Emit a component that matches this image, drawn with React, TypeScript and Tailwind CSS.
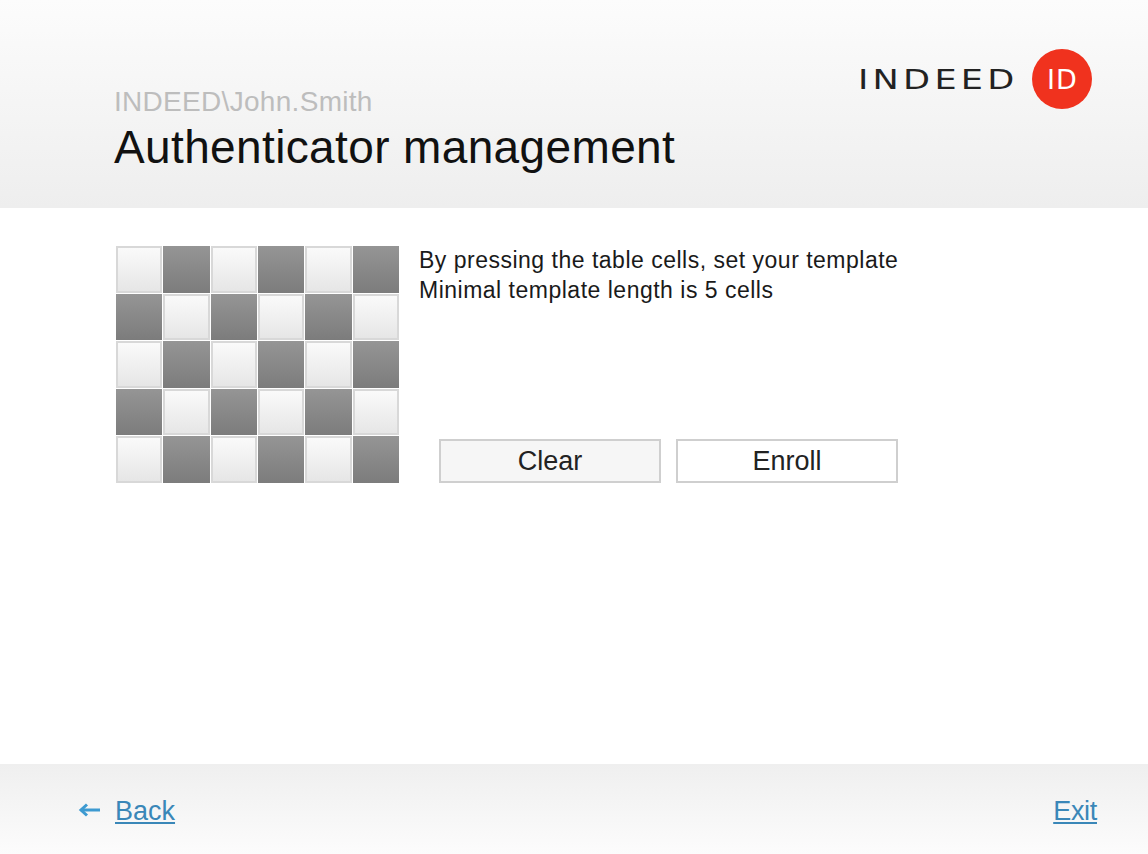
export default function App() {
  const cells = Array.from({ length: 30 }, (_, i) => (Math.floor(i / 6) + (i % 6)) % 2 === 1);
  return (
    <div className="flex h-[854px] w-[1148px] flex-col overflow-hidden bg-white font-['Liberation_Sans',Arial,sans-serif]">
      <header className="flex h-[208px] shrink-0 justify-between bg-gradient-to-b from-[#fcfcfc] to-[#eeeeee] pl-[114px] pr-[56px]">
        <div className="pt-[84px]">
          <div className="text-[28px] leading-[36px] tracking-[0.3px] text-[#bdbdbd]">INDEED\John.Smith</div>
          <h1 className="mt-[1px] text-[46px] leading-[52px] tracking-[0.37px] text-[#111111]">Authenticator management</h1>
        </div>
        <div className="mt-[48px] flex h-[62px] items-center gap-[13px]">
          <span className="origin-right scale-x-[1.3] font-['DejaVu_Sans',sans-serif] text-[27px] leading-none tracking-[3.3px] text-[#222222]">INDEED</span>
          <span className="flex h-[60px] w-[60px] items-center justify-center rounded-full bg-[#f0321e] pl-[1px] font-['DejaVu_Sans',sans-serif] text-[27px] leading-none tracking-[1px] text-white">ID</span>
        </div>
      </header>

      <main className="flex flex-1 items-start pl-[116px] pt-[38px]">
        <div className="grid h-[237px] w-[283px] shrink-0 grid-cols-6 grid-rows-5 gap-[1px]">
          {cells.map((dark, i) => (
            <div
              key={i}
              className={
                dark
                  ? "bg-gradient-to-b from-[#959595] to-[#7c7c7c]"
                  : "border-2 border-[#d8d8d8] bg-gradient-to-b from-[#fafafa] to-[#e6e6e6]"
              }
            />
          ))}
        </div>
        <div className="ml-[20px] flex h-[237px] w-[479px] flex-col justify-between">
          <p className="-mt-[1px] whitespace-nowrap text-[23px] leading-[30px] tracking-[0.5px] text-[#1a1a1a]">
            By pressing the table cells, set your template
            <br />
            Minimal template length is 5 cells
          </p>
          <div className="flex justify-end gap-[15px]">
            <button className="h-[44px] w-[222px] border-2 border-[#cfcfcf] bg-[#f6f6f6] text-[27px] leading-none text-[#222222]">Clear</button>
            <button className="h-[44px] w-[222px] border-2 border-[#cfcfcf] bg-white text-[27px] leading-none text-[#222222]">Enroll</button>
          </div>
        </div>
      </main>

      <footer className="flex h-[90px] shrink-0 items-center justify-between bg-gradient-to-b from-[#efefef] to-[#fcfcfc] pl-[78px] pr-[51px] pt-[4px]">
        <div className="flex items-center gap-[15px]">
          <svg className="mb-[2px]" width="22" height="14" viewBox="0 0 22 14" fill="none" stroke="#3d9ad1" strokeWidth="3">
            <path d="M22 7H3" />
            <path d="M9 1.5 3 7l6 5.5" />
          </svg>
          <a className="text-[27px] leading-none text-[#3a87b8] underline" href="#">Back</a>
        </div>
        <a className="text-[27px] leading-none tracking-[-0.3px] text-[#3a87b8] underline" href="#">Exit</a>
      </footer>
    </div>
  );
}
